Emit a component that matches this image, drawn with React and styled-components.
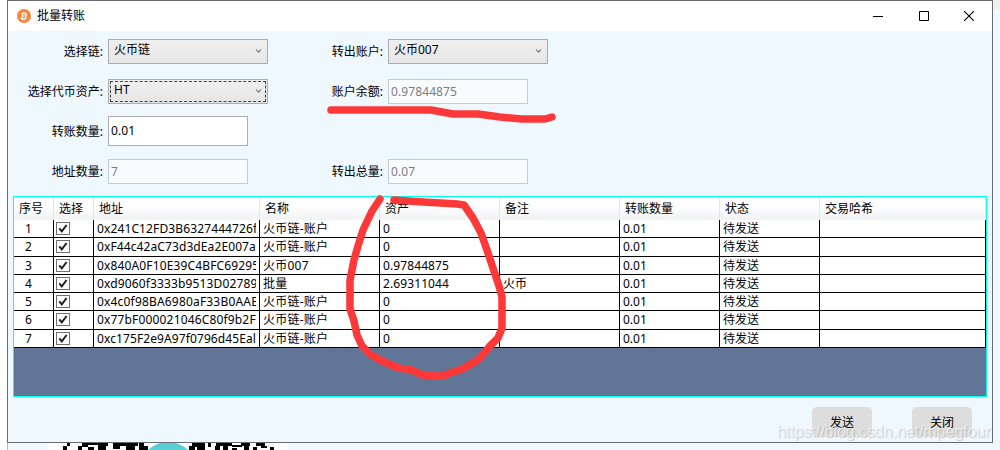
import React, { useState } from "react";
import styled, { createGlobalStyle } from "styled-components";

const GlobalStyle = createGlobalStyle`
  * {
    box-sizing: border-box;
  }
  body {
    margin: 0;
    background: #fff;
    font-family: "Noto Sans", "Noto Sans CJK SC", sans-serif;
    font-size: 12px;
    color: #000;
  }
`;

const Desktop = styled.div`
  position: relative;
  display: grid;
  grid-template-columns: 7px 986px 7px;
  width: 1000px;
  height: 450px;
  overflow: hidden;
`;

const LeftEdge = styled.div`
  background: #fff;
`;

const RightEdge = styled.div`
  background: #eff7ff;
  border-top: 10px solid #f0f0f0;
`;

const Window = styled.div`
  display: flex;
  flex-direction: column;
  height: 443px;
  border: 1px solid #696b70;
  background: #eff7ff;
`;

const TitleBar = styled.div`
  display: flex;
  align-items: center;
  height: 30px;
  padding-left: 9px;
  background: #fff;
`;

const Title = styled.div`
  flex: 1;
  margin-left: 6px;
  line-height: 30px;
`;

const CaptionButton = styled.div`
  display: flex;
  align-items: center;
  justify-content: center;
  width: ${(props) => props.$width || 46}px;
  height: 30px;
`;

const Form = styled.div`
  display: grid;
  grid-template-columns: 96px 172px 100px 1fr;
  column-gap: 4px;
  grid-auto-rows: 40px;
  height: 165px;
`;

const Label = styled.div`
  text-align: right;
  line-height: 18px;
  padding-top: 12px;
  padding-right: 1px;
  white-space: nowrap;
`;

const Select = styled.div`
  display: flex;
  justify-content: space-between;
  width: 160px;
  height: 25px;
  margin-top: 8px;
  padding: 1px 5px 0 5px;
  border: 1px solid #acacac;
  background: linear-gradient(#f0f0f0, #e5e5e5);
  line-height: 18px;
  outline: ${(props) => (props.$focused ? "1px dashed #444" : "none")};
  outline-offset: -3px;
`;

const Chevron = styled.svg`
  margin-top: 7px;
`;

const Input = styled.div`
  width: 140px;
  height: ${(props) => (props.$tall ? 30 : 25)}px;
  margin-top: ${(props) => (props.$tall ? 5 : 8)}px;
  padding-left: 2px;
  border: 1px solid ${(props) => (props.$disabled ? "#c5cbd2" : "#abadb3")};
  background: ${(props) => (props.$disabled ? "#f8fcff" : "#fff")};
  color: ${(props) => (props.$disabled ? "#7b7d80" : "#000")};
  line-height: ${(props) => (props.$tall ? 28 : 23)}px;
  letter-spacing: 0.1px;
`;

const Grid = styled.div`
  width: 974px;
  height: 201px;
  margin-left: 5px;
  border: 1px solid #00fff0;
  background: #617597;
`;

const GridRow = styled.div`
  display: grid;
  grid-template-columns: 40px 40px 166px 120px 120px 120px 100px 100px 166px;
  height: ${(props) => props.$height}px;
`;

const HeaderCell = styled.div`
  padding-left: 5px;
  border-right: 1px solid #e3e5e8;
  border-bottom: 2px solid #d5d8dd;
  background: linear-gradient(#fff 40%, #f1f2f4);
  line-height: 23px;
`;

const Cell = styled.div`
  padding-left: 3px;
  padding-right: 3px;
  border-right: 1px solid #000;
  border-bottom: 1px solid #000;
  background: #fff;
  line-height: 17px;
  white-space: nowrap;
  letter-spacing: ${(props) => props.$spacing || 0}px;
`;

const IndexCell = styled(Cell)`
  padding-left: 11px;
`;

const Clip = styled.div`
  overflow: hidden;
`;

const CheckBox = styled.div`
  display: flex;
  width: 14px;
  height: 13px;
  margin: 2px 0 0 -1px;
  border: 1px solid #707070;
  background: #fff;
`;

const Footer = styled.div`
  display: flex;
  justify-content: flex-end;
  gap: 40px;
  padding: 10px 20px 0 0;
`;

const Button = styled.button`
  width: 60px;
  height: 30px;
  padding: 0;
  border: none;
  border-radius: 5px;
  background: #ddd;
  color: #000;
  font: inherit;
`;

const BackWindow = styled.div`
  height: 7px;
  padding-left: 40px;
  border-left: 1px solid #b5bbc2;
  background: #eff7ff;
`;

const QrStrip = styled.svg`
  display: block;
  background: #fff;
`;

const Annotation = styled.svg`
  position: absolute;
  left: 0;
  top: 0;
  pointer-events: none;
`;

const Watermark = styled.div`
  position: absolute;
  left: 777px;
  top: 422px;
  font-family: "Liberation Sans", Arial, sans-serif;
  font-size: 16px;
  line-height: 20px;
  letter-spacing: -0.06px;
  white-space: nowrap;
  color: rgba(255, 255, 255, 0.55);
  text-shadow: 1px 1px 1px rgba(120, 120, 120, 0.35);
`;

const COLUMNS = [
  "序号",
  "选择",
  "地址",
  "名称",
  "资产",
  "备注",
  "转账数量",
  "状态",
  "交易哈希",
];

const ROWS = [
  { address: "0x241C12FD3B6327444726f", name: "火币链-账户", asset: "0", height: 18, spacing: 0.12 },
  { address: "0xF44c42aC73d3dEa2E007a", name: "火币链-账户", asset: "0", height: 19, spacing: 0.1 },
  { address: "0x840A0F10E39C4BFC69295", name: "火币007", asset: "0.97844875", height: 18, spacing: 0.14 },
  { address: "0xd9060f3333b9513D02789", name: "批量", asset: "2.69311044", note: "火币", height: 18, spacing: 0.14 },
  { address: "0x4c0f98BA6980aF33B0AAE", name: "火币链-账户", asset: "0", height: 18, spacing: 0.18 },
  { address: "0x77bF000021046C80f9b2F", name: "火币链-账户", asset: "0", height: 19, spacing: 0.16 },
  { address: "0xc175F2e9A97f0796d45Eal", name: "火币链-账户", asset: "0", height: 18, spacing: 0.1 },
];

// [x, y, width, height] of the visible QR modules
const MODULES = [
  [15, 3, 4, 4], [19, 0, 3, 3], [30, 3, 4, 4], [34, 0, 6, 4], [40, 0, 14, 2],
  [40, 4, 6, 3], [50, 2, 8, 5], [54, 0, 6, 3], [65, 0, 7, 6], [72, 0, 18, 3],
  [78, 3, 9, 4], [91, 0, 5, 7], [96, 3, 4, 4], [141, 3, 6, 4], [144, 0, 13, 4],
  [149, 4, 8, 3], [160, 0, 3, 4], [168, 0, 16, 3], [167, 3, 5, 4], [175, 3, 5, 4],
  [184, 2, 10, 2], [184, 5, 5, 2], [193, 0, 9, 3], [196, 3, 5, 4], [208, 0, 9, 3],
  [205, 4, 4, 3], [213, 3, 6, 2], [222, 4, 4, 3],
];

function BitcoinIcon() {
  return (
    <svg width="14" height="14" viewBox="0 0 14 14">
      <circle cx="7" cy="7" r="7" fill="#f7863b" />
      <path
        d="M5.7 3.9 4.9 10M4 4.2l4.2.6c2 .3 1.7 2.3-.2 2.2L5.3 6.7M8 7c2.1.4 1.5 2.9-.6 2.7l-3.9-.5M7 3.1 6.8 4.4M8.8 3.4 8.6 4.7M5.5 9.8l-.2 1.3M7.2 10 7 11.3"
        fill="none"
        stroke="#fff"
        strokeWidth="1.1"
      />
    </svg>
  );
}

function ComboBox({ value, focused }) {
  return (
    <Select $focused={focused}>
      {value}
      <Chevron width="7" height="6" viewBox="0 0 7 6">
        <path d="M1 1.5 3.5 4.2 6 1.5" fill="none" stroke="#707070" strokeWidth="1.1" />
      </Chevron>
    </Select>
  );
}

function App() {
  const [rows] = useState(ROWS);

  return (
    <Desktop>
      <GlobalStyle />
      <LeftEdge />
      <div>
        <Window>
          <TitleBar>
            <BitcoinIcon />
            <Title>批量转账</Title>
            <CaptionButton>
              <svg width="10" height="10">
                <path d="M0 5.5H10" stroke="#000" />
              </svg>
            </CaptionButton>
            <CaptionButton $width={45}>
              <svg width="10" height="10">
                <path d="M.5.5H9.5V9.5H.5Z" fill="none" stroke="#000" />
              </svg>
            </CaptionButton>
            <CaptionButton>
              <svg width="10" height="10">
                <path d="M0 0 10 10M10 0 0 10" stroke="#000" strokeWidth="1.1" />
              </svg>
            </CaptionButton>
          </TitleBar>

          <Form>
            <Label>选择链:</Label>
            <ComboBox value="火币链" />
            <Label>转出账户:</Label>
            <ComboBox value="火币007" />

            <Label>选择代币资产:</Label>
            <ComboBox value="HT" focused />
            <Label>账户余额:</Label>
            <Input $disabled>0.97844875</Input>

            <Label>转账数量:</Label>
            <Input $tall>0.01</Input>
            <div />
            <div />

            <Label>地址数量:</Label>
            <Input $disabled>7</Input>
            <Label>转出总量:</Label>
            <Input $disabled>0.07</Input>
          </Form>

          <Grid>
            <GridRow $height={23}>
              {COLUMNS.map((title) => (
                <HeaderCell key={title}>{title}</HeaderCell>
              ))}
            </GridRow>
            {rows.map((row, i) => (
              <GridRow key={row.address} $height={row.height}>
                <IndexCell>{i + 1}</IndexCell>
                <Cell>
                  <CheckBox>
                    <svg width="12" height="11" viewBox="0 0 12 11">
                      <path d="M2.3 5.3 4.8 8.3 9.6 2" fill="none" stroke="#212121" strokeWidth="2" />
                    </svg>
                  </CheckBox>
                </Cell>
                <Cell $spacing={row.spacing}>
                  <Clip>{row.address}</Clip>
                </Cell>
                <Cell $spacing={0.25}>{row.name}</Cell>
                <Cell $spacing={0.1}>{row.asset}</Cell>
                <Cell>{row.note}</Cell>
                <Cell>0.01</Cell>
                <Cell>待发送</Cell>
                <Cell />
              </GridRow>
            ))}
          </Grid>

          <Footer>
            <Button>发送</Button>
            <Button>关闭</Button>
          </Footer>
        </Window>

        <BackWindow>
          <QrStrip width="240" height="7">
            {MODULES.map(([x, y, w, h]) => (
              <rect key={`${x}-${y}`} x={x} y={y} width={w} height={h} />
            ))}
            <circle cx="120" cy="28" r="29" fill="#5bcfd6" />
          </QrStrip>
        </BackWindow>
      </div>
      <RightEdge />

      <Annotation width="1000" height="450" fill="none" stroke="#fd3838" strokeWidth="7.5" strokeLinecap="round" strokeLinejoin="round">
        <path d="M331 110H431L453 114H478L500 117L522 119H545L552 117" />
        <path d="M380 199L372 211L363 230L358 246L354 260L350 280V309L354 321L357 335L362 346L371 355L380 360L398 368L410 369.5L423 375L435 376H442L450 373L462 369L472 363.5L480 358L489 347L498 338L502 328V297L499 286L493 268L487 250L481 233L473 218L464 205L457 204L440 203L423 202L394 200" />
      </Annotation>
      <Watermark>https://blog.csdn.net/mpegfour</Watermark>
    </Desktop>
  );
}

export default App;
